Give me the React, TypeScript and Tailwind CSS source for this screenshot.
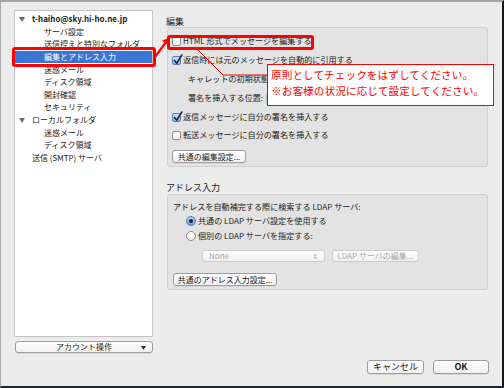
import React from 'react';

const jp = { fontFamily: '"Noto Sans CJK JP", "Liberation Sans", sans-serif' };

function Tri() {
  return (
    <svg width="6" height="5" viewBox="0 0 6 5" className="shrink-0">
      <path d="M0 0h6L3 5z" fill="#6e6e6e" />
    </svg>
  );
}

function CheckBox({ checked }: { checked?: boolean }) {
  if (!checked) {
    return <span className="w-[9px] h-[9px] shrink-0 rounded-[2px] border border-[#8c8c8c] bg-gradient-to-b from-white to-[#f0f0f0]" />;
  }
  return (
    <span className="relative w-[9px] h-[9px] shrink-0 rounded-[2px] border border-[#5b7fb5] bg-gradient-to-b from-[#cfe0f7] to-[#8fb4e6]">
      <svg width="10" height="11" viewBox="0 0 10 11" className="absolute left-[0px] top-[-3px]">
        <path d="M1.5 6.5l2.3 2.7L8.8 1" fill="none" stroke="#17264a" strokeWidth="1.6" strokeLinecap="round" strokeLinejoin="round" />
      </svg>
    </span>
  );
}

function Radio({ checked }: { checked?: boolean }) {
  if (checked) {
    return (
      <span className="w-[10px] h-[10px] shrink-0 rounded-full border border-[#4f78b3] bg-gradient-to-b from-[#bcd5f5] to-[#6d9de0] flex items-center justify-center">
        <span className="w-[4px] h-[4px] rounded-full bg-[#1b2540]" />
      </span>
    );
  }
  return <span className="w-[10px] h-[10px] shrink-0 rounded-full border border-[#8c8c8c] bg-gradient-to-b from-white to-[#eeeeee]" />;
}

function Btn({ children, className = '', disabled }: { children: React.ReactNode; className?: string; disabled?: boolean }) {
  return (
    <div
      className={
        'flex items-center justify-center rounded-[3px] border bg-gradient-to-b from-white to-[#f1f1f1] whitespace-nowrap ' +
        (disabled ? 'border-[#cdcdcd] text-[#a9a9a9] ' : 'border-[#9c9c9c] text-[#222] shadow-[0_1px_0_#d8d8d8] ') +
        className
      }
    >
      {children}
    </div>
  );
}

const treeRows: { label: string; level: number; open?: boolean; bold?: boolean; selected?: boolean }[] = [
  { label: 't-haiho@sky.hi-ho.ne.jp', level: 0, open: true, bold: true },
  { label: 'サーバ設定', level: 1 },
  { label: '送信控えと特別なフォルダ', level: 1 },
  { label: '編集とアドレス入力', level: 1, selected: true },
  { label: '迷惑メール', level: 1 },
  { label: 'ディスク領域', level: 1 },
  { label: '開封確認', level: 1 },
  { label: 'セキュリティ', level: 1 },
  { label: 'ローカルフォルダ', level: 0, open: true },
  { label: '迷惑メール', level: 1 },
  { label: 'ディスク領域', level: 1 },
  { label: '送信 (SMTP) サーバ', level: 0 },
];

export default function App() {
  return (
    <div
      style={jp}
      className="relative w-[504px] h-[388px] flex bg-[#ececec] text-[#222] border-t-2 border-t-[#a4a4a4] border-r-2 border-r-[#151515] border-b-2 border-b-[#1d2633] border-l border-l-[#a8a8a8] overflow-hidden"
    >
      {/* Left: account tree */}
      <div className="w-[152px] shrink-0 pl-[13px] pt-[8px] flex flex-col">
        <div className="w-[139px] h-[327px] bg-white border border-[#c6c6c6] pt-[2px]">
          {treeRows.map((r, i) => (
            <div
              key={i}
              className={
                'h-[12.6px] flex items-center text-[8px] leading-none whitespace-nowrap ' +
                (r.selected ? 'bg-[#3a74d5] text-white ' : '') +
                (r.level === 0 ? 'pl-[4px]' : 'pl-[29px]')
              }
            >
              {r.level === 0 && (
                <span className="w-[6px] mr-[7px] flex">{r.open ? <Tri /> : null}</span>
              )}
              <span className={r.bold ? 'font-bold' : ''}>{r.label}</span>
            </div>
          ))}
        </div>
        <Btn className="mt-[4px] h-[12px] w-[138px] ml-[1px] relative text-[8px]">
          <span>アカウント操作</span>
          <svg width="5" height="4" viewBox="0 0 5 4" className="absolute right-[6px] top-[4px]">
            <path d="M0 0h5L2.5 4z" fill="#333" />
          </svg>
        </Btn>
      </div>

      {/* Right: settings */}
      <div className="flex-1 pl-[14px] pr-[14px] pt-[14px] flex flex-col">
        <div className="h-[11px] leading-[11px] text-[9px] -ml-px">編集</div>
        <div className="h-[140px] rounded-[3px] border border-[#cfcfcf] bg-[#e3e3e3] pl-[4px] pt-[4px] text-[8.1px] leading-none whitespace-nowrap">
          <div className="h-[19px] flex items-center gap-[2px]">
            <CheckBox />
            <span>HTML 形式でメッセージを編集する</span>
          </div>
          <div className="h-[19px] flex items-center gap-[2px]">
            <CheckBox checked />
            <span>返信時には元のメッセージを自動的に引用する</span>
          </div>
          <div className="h-[19px] flex items-center pl-[16px]">
            <span className="w-[78px] shrink-0">キャレットの初期状態:</span>
            <div className="w-[131px] h-[13px] shrink-0 rounded-[3px] border border-[#b5b5b5] bg-white" />
          </div>
          <div className="h-[19px] flex items-center pl-[16px]">
            <span className="w-[78px] shrink-0">署名を挿入する位置:</span>
            <div className="w-[131px] h-[13px] shrink-0 rounded-[3px] border border-[#b5b5b5] bg-white" />
          </div>
          <div className="h-[19px] flex items-center gap-[2px]">
            <CheckBox checked />
            <span>返信メッセージに自分の署名を挿入する</span>
          </div>
          <div className="h-[17px] flex items-center gap-[2px]">
            <CheckBox />
            <span>転送メッセージに自分の署名を挿入する</span>
          </div>
          <Btn className="mt-[6px] h-[13px] w-[74px] text-[8px]">共通の編集設定...</Btn>
        </div>

        <div className="mt-[15px] h-[11px] leading-[11px] text-[9px] -ml-px">アドレス入力</div>
        <div className="mt-[1px] h-[96px] rounded-[3px] border border-[#cfcfcf] bg-[#e3e3e3] pl-[5px] pt-[5px] text-[8.1px] leading-none whitespace-nowrap">
          <div className="h-[14px] flex items-center">アドレスを自動補完する際に検索する LDAP サーバ:</div>
          <div className="h-[14px] flex items-center gap-[2px] pl-[13px]">
            <Radio checked />
            <span>共通の LDAP サーバ設定を使用する</span>
          </div>
          <div className="h-[16px] flex items-center gap-[2px] pl-[13px]">
            <Radio />
            <span>個別の LDAP サーバを指定する:</span>
          </div>
          <div className="mt-[6px] h-[12px] flex items-center gap-[7px] pl-[29px]">
            <Btn disabled className="w-[123px] h-[12px] !justify-between px-[6px] text-[8px]">
              <span>None</span>
              <span className="text-[7px]">⇕</span>
            </Btn>
            <Btn disabled className="w-[87px] h-[12px] text-[8px]">LDAP サーバの編集...</Btn>
          </div>
          <Btn className="mt-[11px] h-[13px] w-[104px] text-[8px]">共通のアドレス入力設定...</Btn>
        </div>

        <div className="flex-1" />
        <div className="flex justify-end gap-[9px] pb-[12px] -mr-px">
          <Btn className="w-[57px] h-[14px] text-[9px]">キャンセル</Btn>
          <Btn className="w-[56px] h-[14px] text-[9px] font-bold">OK</Btn>
        </div>
      </div>

      {/* Annotations */}
      <div className="absolute left-[11px] top-[45px] w-[144px] h-[20px] rounded-[3px] border-[3px] border-[#ff0000]" />
      <div className="absolute left-[166px] top-[33px] w-[147px] h-[15px] rounded-[3px] border-[3px] border-[#ff0000]" />
      <svg className="absolute left-[-1px] top-[-2px] pointer-events-none" width="504" height="388" viewBox="0 0 504 388">
        <path d="M155 57L166 42" stroke="#ff0000" strokeWidth="2.2" fill="none" />
        <path d="M169 38l-7 2.5 5 4z" fill="#ff0000" />
        <path d="M196 48L223 75H268" stroke="#ff0000" strokeWidth="1" fill="none" />
      </svg>
      <div className="absolute left-[266px] top-[62px] w-[227px] h-[42px] bg-white border-[1.5px] border-[#ff0000] pl-[3px] pt-[2px] text-[#ff0000] text-[10.7px] leading-[16px] whitespace-nowrap">
        <div>原則としてチェックをはずしてください。</div>
        <div>※お客様の状況に応じて設定してください。</div>
      </div>
    </div>
  );
}
